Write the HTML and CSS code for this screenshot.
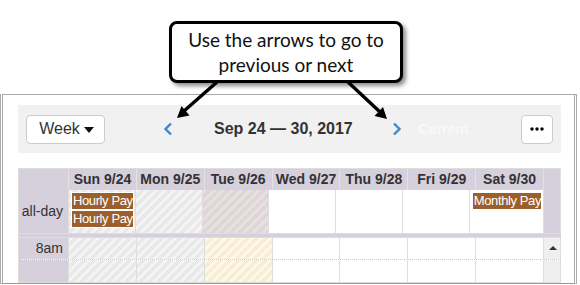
FILE: index.html
```html
<html>
<head>
<title>Pay calendar</title>
<link rel="stylesheet" href="styles.css">
</head>
<body>
<div class="frame">
    <div class="toolbar">
        <button class="viewBtn">Week <span class="caret"></span></button>
        <a class="nav prev" href="#"><svg width="10" height="14" viewBox="0 0 10 14"><path d="M8 1.5 L2.5 7 L8 12.5" fill="none" stroke="#3b88cc" stroke-width="2.4"/></svg></a>
        <h2 class="range">Sep 24 &mdash; 30, 2017</h2>
        <a class="nav next" href="#"><svg width="10" height="14" viewBox="0 0 10 14"><path d="M2 1.5 L7.5 7 L2 12.5" fill="none" stroke="#3b88cc" stroke-width="2.4"/></svg></a>
        <span class="today">Current</span>
        <button class="moreBtn"><svg width="14" height="4" viewBox="0 0 14 4"><circle cx="2" cy="2" r="1.7"/><circle cx="7" cy="2" r="1.7"/><circle cx="12" cy="2" r="1.7"/></svg></button>
    </div>
    <div class="cal">
        <div class="row head">
            <div class="axis"></div>
            <div>Sun 9/24</div>
            <div>Mon 9/25</div>
            <div>Tue 9/26</div>
            <div>Wed 9/27</div>
            <div>Thu 9/28</div>
            <div>Fri 9/29</div>
            <div>Sat 9/30</div>
            <div class="gutter"></div>
        </div>
        <div class="row allday">
            <div class="axis">all-day</div>
            <div class="off">
                <span class="evt">Hourly Pay</span>
                <span class="evt">Hourly Pay</span>
            </div>
            <div class="off"></div>
            <div class="offPink"></div>
            <div></div>
            <div></div>
            <div></div>
            <div><span class="evt">Monthly Pay</span></div>
            <div class="gutter"></div>
        </div>
        <div class="divider"></div>
        <div class="row slot dotted">
            <div class="axis">8am</div>
            <div class="off"></div>
            <div class="off"></div>
            <div class="today2"></div>
            <div></div><div></div><div></div><div></div>
            <div class="scroll"><span class="up"></span></div>
        </div>
        <div class="row slot">
            <div class="axis"></div>
            <div class="off"></div>
            <div class="off"></div>
            <div class="today2"></div>
            <div></div><div></div><div></div><div></div>
            <div class="scroll"></div>
        </div>
        <div class="row slot">
            <div class="axis"></div>
            <div class="off"></div>
            <div class="off"></div>
            <div class="today2"></div>
            <div></div><div></div><div></div><div></div>
            <div class="scroll"></div>
        </div>
    </div>
</div>

<div class="callout">Use the arrows to go to<br>previous or next</div>
<svg class="pointers" width="580" height="130" viewBox="0 0 580 130">
    <line x1="217" y1="82" x2="184" y2="111" stroke="#000" stroke-width="3.4"/>
    <polygon points="177,118 189.5,115.5 181.5,106"/>
    <line x1="348" y1="82" x2="380" y2="112" stroke="#000" stroke-width="3.4"/>
    <polygon points="387,119 374.5,116 383,107"/>
</svg>
</body>
</html>
```

FILE: styles.css
```css
body{margin:0;width:580px;height:285px;overflow:hidden;position:relative;background:#fff;color:#333;font-family:"Liberation Sans",Arial,sans-serif;}
h2{margin:0;}
a{text-decoration:none;color:inherit;}

.frame{margin-top:94px;width:577px;height:190px;box-sizing:border-box;border-top:1px solid #aaa;border-bottom:1px solid #999;border-left:3px double #aaa;border-right:3px double #aaa;padding:10px 13px 0 15px;overflow:hidden;}

.toolbar{height:48px;background:#f1f1f1;display:flex;align-items:center;padding:0 8px;margin-bottom:15px;}
.viewBtn{width:79px;height:29px;box-sizing:border-box;border:1px solid #ccc;border-radius:4px;background:#fff;color:#333;font:16px "Liberation Sans",Arial,sans-serif;display:flex;align-items:center;justify-content:center;gap:4px;padding:0 0 0 2px;}
.caret{width:0;height:0;border-top:6px solid #111;border-left:5.5px solid transparent;border-right:5.5px solid transparent;margin-top:1px;}
.nav{display:flex;height:14px;}
.prev{margin-left:58px;}
.range{font-size:16px;font-weight:bold;color:#333;margin-left:41px;width:137px;white-space:nowrap;}
.next{margin-left:41px;}
.today{margin-left:16px;font-size:14px;font-weight:bold;color:#f9f9f9;}
.moreBtn{margin-left:auto;width:32px;height:29px;box-sizing:border-box;border:1px solid #ccc;border-radius:4px;background:#fff;display:flex;align-items:center;justify-content:center;padding:0;}

.cal{border-top:1px solid #ddd;border-left:1px solid #ddd;width:543px;box-sizing:border-box;}
.row{display:grid;grid-template-columns:50px repeat(7,1fr) 17px;}
.row > div{border-right:1px solid #ddd;box-sizing:border-box;}
.head{height:21px;background:#d6cfdc;font-size:14px;font-weight:bold;}
.head > div{border-right:1px solid #e4e0e8;text-align:center;line-height:20px;white-space:nowrap;overflow:hidden;}
.axis{background:#d6cfdc;font-size:14px;text-align:right;padding-right:5px;}
.allday{height:43px;border-bottom:1px solid #ddd;}
.allday .axis{line-height:42px;}
.allday > div{padding-top:2px;}
.allday > .axis{padding-top:0;}
.gutter{background:#d6cfdc;}
.divider{height:3px;background:#d6cfdc;border-bottom:1px solid #ddd;}
.slot{height:22px;border-bottom:1px solid #ddd;}
.dotted{height:21px;border-bottom:1px dotted #ccc;}
.slot .axis{line-height:20px;}

.off{background:repeating-linear-gradient(135deg,#f4f4f4 0 3.2px,#e9e9e9 3.2px 6.4px);}
.offPink{background:repeating-linear-gradient(135deg,#e7e0e0 0 3.2px,#ded6d6 3.2px 6.4px);}
.today2{background:repeating-linear-gradient(135deg,#fdf8e8 0 3.2px,#f8eed5 3.2px 6.4px);}
.scroll{background:#efefef;position:relative;}
.up{position:absolute;left:5px;top:8px;width:0;height:0;border-bottom:4px solid #333;border-left:4px solid transparent;border-right:4px solid transparent;}

.evt{display:block;margin:1px 2px 2px 3px;height:16px;background:#9c5f2c;color:#fff;font-size:13px;letter-spacing:-0.4px;line-height:16px;padding-left:1px;white-space:nowrap;overflow:hidden;box-shadow:0 0 0 1px #fff;}

.callout{position:absolute;left:169px;top:21px;width:234px;height:62px;box-sizing:border-box;border:3px solid #000;border-radius:8px;background:#fff;box-shadow:3px 3px 4px rgba(0,0,0,.45);display:flex;align-items:center;justify-content:center;text-align:center;font:19px/25px Lato,"Liberation Sans",sans-serif;color:#111;z-index:2;}
.pointers{position:absolute;left:0;top:0;z-index:1;}
```
